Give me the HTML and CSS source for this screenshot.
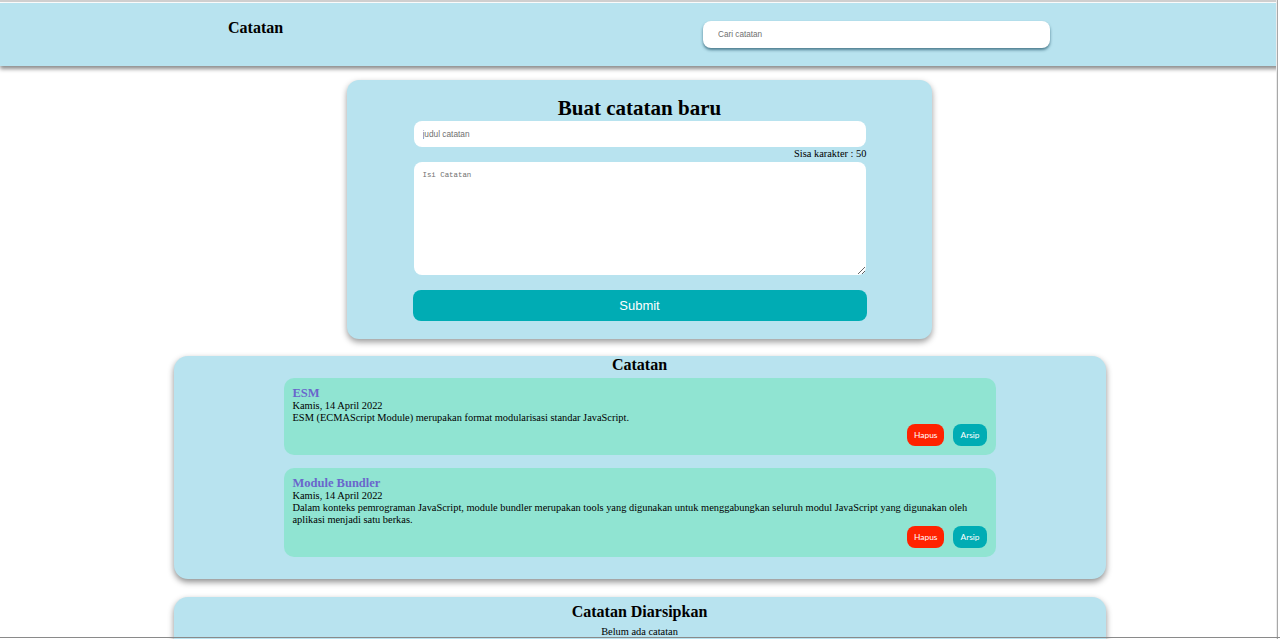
FILE: index.html
```html
<!DOCTYPE html>
<html lang="id">
<head>
<meta charset="utf-8">
<title>Catatan</title>
<link rel="stylesheet" href="styles.css">
</head>
<body>
<header class="app-header">
  <h1 class="brand">Catatan</h1>
  <input class="search" type="text" placeholder="Cari catatan">
</header>
<main class="main">
  <section class="form-card">
    <h2 class="form-title">Buat catatan baru</h2>
    <input class="title-input" type="text" placeholder="judul catatan">
    <p class="counter">Sisa karakter : 50</p>
    <textarea class="body-input" placeholder="Isi Catatan"></textarea>
    <button class="submit" type="button">Submit</button>
  </section>

  <section class="panel notes">
    <h3 class="panel-title">Catatan</h3>
    <div class="note-list">
      <article class="note">
        <h4 class="note-title">ESM</h4>
        <p class="note-date">Kamis, 14 April 2022</p>
        <p class="note-body">ESM (ECMAScript Module) merupakan format modularisasi standar JavaScript.</p>
        <div class="note-actions">
          <button class="btn btn-delete" type="button">Hapus</button>
          <button class="btn btn-archive" type="button">Arsip</button>
        </div>
      </article>
      <article class="note">
        <h4 class="note-title">Module Bundler</h4>
        <p class="note-date">Kamis, 14 April 2022</p>
        <p class="note-body">Dalam konteks pemrograman JavaScript, module bundler merupakan tools yang digunakan untuk menggabungkan seluruh modul JavaScript yang digunakan oleh aplikasi menjadi satu berkas.</p>
        <div class="note-actions">
          <button class="btn btn-delete" type="button">Hapus</button>
          <button class="btn btn-archive" type="button">Arsip</button>
        </div>
      </article>
    </div>
  </section>

  <section class="panel archive">
    <h3 class="panel-title">Catatan Diarsipkan</h3>
    <p class="empty">Belum ada catatan</p>
  </section>
</main>
<div class="frame-right"></div>
<div class="frame-bottom"></div>
</body>
</html>
```
FILE: styles.css
```css
* { box-sizing: border-box; }

html, body { height: 100%; }

body {
  margin: 0;
  padding-top: 1px;
  border-top: 2px solid #cfcfcf;
  font-family: "Liberation Serif", "Times New Roman", serif;
  color: #000;
  background: #fff;
  overflow: hidden;
}

.app-header {
  height: 63px;
  background: #b8e3ef;
  box-shadow: 0 3px 4px rgba(0, 0, 0, 0.45);
  display: grid;
  grid-template-columns: 703px 347px;
  align-items: start;
  position: relative;
  z-index: 1;
}

.brand {
  margin: 16px 0 0 228px;
  font-size: 16px;
  line-height: 18px;
  font-weight: bold;
}

.search {
  margin-top: 18px;
  width: 347px;
  height: 27px;
  border: none;
  border-radius: 8px;
  padding: 0 15px;
  font-family: "Liberation Sans", Arial, sans-serif;
  font-size: 8.2px;
  background: #fff;
  box-shadow: 0 2px 3px rgba(40, 90, 110, 0.75);
  outline: none;
}

.search::placeholder,
.title-input::placeholder { color: #6f6f6f; }

.main {
  display: flex;
  flex-direction: column;
  align-items: center;
  padding-right: 1px;
}

.form-card {
  width: 585px;
  margin-top: 14px;
  padding: 16px 0 18px;
  background: #b8e3ef;
  border-radius: 12px;
  box-shadow: 0 3px 6px rgba(0, 0, 0, 0.4);
  display: flex;
  flex-direction: column;
  align-items: center;
}

.form-title {
  margin: 0;
  font-size: 21px;
  line-height: 24px;
  font-weight: bold;
}

.title-input {
  margin-top: 1px;
  width: 452px;
  height: 26px;
  border: none;
  border-radius: 8px;
  padding: 0 9px;
  font-family: "Liberation Sans", Arial, sans-serif;
  font-size: 8.3px;
  outline: none;
}

.counter {
  width: 454px;
  margin: 1px 0 2px;
  text-align: right;
  font-size: 10.4px;
  line-height: 12px;
}

.body-input {
  width: 452px;
  height: 113px;
  border: none;
  border-radius: 8px;
  padding: 9px 9px;
  font-family: "Liberation Mono", "DejaVu Sans Mono", monospace;
  font-size: 7.4px;
  outline: none;
}

.body-input::placeholder { color: #707070; }

.submit {
  margin-top: 15px;
  width: 454px;
  height: 31px;
  border: none;
  border-radius: 8px;
  background: #00acb4;
  color: #fff;
  font-family: "Liberation Sans", Arial, sans-serif;
  font-size: 13px;
}

.panel {
  width: 932px;
  background: #b8e3ef;
  border-radius: 14px;
  box-shadow: 0 3px 6px rgba(0, 0, 0, 0.45);
  display: flex;
  flex-direction: column;
  align-items: center;
}

.notes {
  margin-top: 17px;
  padding: 0 0 22px;
}

.archive {
  margin-top: 18px;
  padding: 6px 0 20px;
}

.panel-title {
  margin: 0;
  font-size: 16px;
  line-height: 18px;
  font-weight: bold;
}

.note-list {
  margin-top: 4px;
  display: flex;
  flex-direction: column;
  gap: 13px;
}

.note {
  width: 712px;
  background: #90e4d2;
  border-radius: 10px;
  padding: 8px 9px 9px;
}

.note-title {
  margin: 0;
  font-size: 12.5px;
  line-height: 14px;
  font-weight: bold;
  color: #6a66cc;
}

.note-date,
.note-body {
  margin: 0;
  font-size: 10.4px;
  line-height: 12px;
}

.note-actions {
  display: flex;
  justify-content: flex-end;
  gap: 9px;
}

.btn {
  height: 22px;
  border: none;
  border-radius: 8px;
  padding: 0 7px;
  color: #fff;
  font-family: Lato, "Open Sans", sans-serif;
  font-size: 8.4px;
}

.btn-delete { background: #ff2200; }
.btn-archive { background: #00acb4; }

.empty {
  margin: 5px 0 0;
  font-size: 10.4px;
  line-height: 12px;
}

.frame-right {
  position: fixed;
  top: 0;
  right: 0;
  bottom: 0;
  width: 4px;
  background: linear-gradient(to right, #ececec 0 1px, #a8a8a8 1px 2px, #ffffff 2px);
  z-index: 2;
}

.frame-bottom {
  position: fixed;
  left: 0;
  right: 0;
  bottom: 1px;
  height: 1px;
  background: #8a8a8a;
  z-index: 2;
}
```
